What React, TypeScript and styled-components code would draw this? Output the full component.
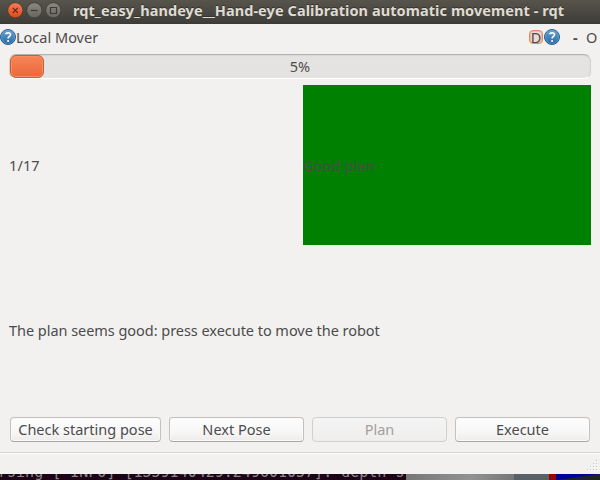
import React from 'react';
import styled, { createGlobalStyle } from 'styled-components';

const GlobalStyle = createGlobalStyle`
  * { box-sizing: border-box; }
  body { margin: 0; overflow: hidden; background: #f2f1f0; }
`;

const Screen = styled.div`
  display: flex;
  flex-direction: column;
  width: 600px;
  height: 480px;
  overflow: hidden;
  background: #f2f1f0;
  color: #4c4c4c;
  font: 14.5px/20px "Noto Sans", sans-serif;
`;

const Label = styled.span<{ $spacing?: number }>`
  white-space: pre;
  letter-spacing: ${p => p.$spacing ?? 0}px;
`;

const TitleBar = styled.header`
  display: flex;
  align-items: center;
  flex: 0 0 24px;
  padding: 0 0 3px 7px;
  background: linear-gradient(#57544b, #3e3d38);
  border-bottom: 1px solid #3b3a35;
`;

const WindowButtons = styled.div`
  display: flex;
  gap: 3px;
  width: 66px;
`;

const WindowButton = styled.svg`
  display: block;
  width: 16px;
  height: 16px;
`;

const Title = styled.h1`
  margin: 0;
  color: #dfdbd2;
  font-size: 14.5px;
  font-weight: 700;
  line-height: 20px;
  white-space: nowrap;
  letter-spacing: 0.075px;
  text-shadow: 0 -1px #33322e;
`;

const DockBar = styled.div`
  display: flex;
  align-items: center;
  flex: 0 0 28px;
  padding: 0 3px 2px 0;
`;

const DockActions = styled.div`
  display: flex;
  align-items: center;
  margin-left: auto;
`;

const ReloadButton = styled.span`
  display: flex;
  align-items: center;
  justify-content: center;
  width: 14px;
  height: 14px;
  margin-right: 1px;
  border: 1px solid #e58a66;
  border-radius: 4px;
  background: #eadbd3;
  box-shadow: inset 0 0 0 1px #e9b9a4;
  line-height: 14px;
`;

const MinimizeGlyph = styled.span`
  width: 26px;
  padding-left: 13px;
  font-weight: 700;
`;

const FloatGlyph = styled.span`
  width: 11px;
`;

const HelpSvg = styled.svg`
  display: block;
  flex: none;
  width: 16px;
  height: 16px;
`;

const Track = styled.div`
  display: grid;
  flex: 0 0 25px;
  margin: 2px 9px 0 9px;
  border: 1px solid #d3d1cf;
  border-top-color: #b4b1ae;
  border-bottom-color: #fff;
  border-radius: 7px;
  background: #e4e3e1;
  box-shadow: inset 0 1px 1px #d7d5d3;
`;

const Chunk = styled.div`
  grid-area: 1 / 1;
  width: 34px;
  height: 23px;
  border: 1px solid #cb5b31;
  border-radius: 6px;
  background: linear-gradient(#f88457, #e9683b);
  box-shadow: inset 0 0 0 1px #f58d67;
`;

const Percent = styled.div`
  grid-area: 1 / 1;
  align-self: center;
  padding-bottom: 1px;
  text-align: center;
`;

const StatusGrid = styled.div`
  display: grid;
  grid-template-columns: 294px 288px;
  flex: 0 0 160px;
  margin: 6px 9px 0;
`;

const StatusCell = styled.div<{ $good?: boolean }>`
  display: flex;
  align-items: center;
  background: ${p => (p.$good ? '#008000' : 'transparent')};
`;

const Message = styled.div`
  display: flex;
  align-items: center;
  flex: 0 0 172px;
  padding: 0 0 2px 9px;
`;

const ButtonRow = styled.div`
  display: grid;
  grid-template-columns: 151px 135px 135px 135px;
  gap: 8px;
  flex: 0 0 25px;
  margin-left: 10px;
`;

const Button = styled.button`
  height: 25px;
  padding: 0 0 1px;
  border: 1px solid #c3c0bd;
  border-bottom-color: #a8a5a2;
  border-radius: 4px;
  background: linear-gradient(#fefefe, #f8f7f7 60%, #edecea);
  box-shadow: inset 0 0 0 1px #fbfafa;
  color: inherit;
  font: inherit;
  line-height: 20px;
  &:disabled {
    border-color: #d2d0ce;
    background: linear-gradient(#f5f4f4, #efeeed);
    box-shadow: none;
    color: #a2a09e;
  }
`;

const StatusBar = styled.footer`
  display: flex;
  align-items: flex-end;
  justify-content: flex-end;
  flex: 0 0 22px;
  margin-top: 10px;
  padding: 0 1px 2px 0;
  border-top: 1px solid #d4d1cf;
  box-shadow: inset 0 1px #fff;
`;

const Backdrop = styled.div`
  display: flex;
  flex: 0 0 6px;
  background: #22262a;
`;

const Terminal = styled.div`
  flex: 0 0 406px;
  height: 6px;
  overflow: hidden;
  background: #1c0315;
  color: #88868a;
  font: 15px/16px "DejaVu Sans Mono", monospace;
  white-space: pre;
`;

const TerminalLine = styled.div`
  margin: -10px 0 0 -11px;
`;

const Patch = styled.div<{ $width: number; $fill: string }>`
  flex: 0 0 ${p => p.$width}px;
  height: 6px;
  background: ${p => p.$fill};
`;

const HelpIcon = () => (
  <HelpSvg viewBox="0 0 16 16">
    <defs>
      <linearGradient id="help" x2="0" y2="1">
        <stop stopColor="#65a3d3" />
        <stop offset="1" stopColor="#2869a4" />
      </linearGradient>
    </defs>
    <circle cx="8" cy="8" r="7.5" fill="url(#help)" stroke="#235f94" />
    <circle cx="8" cy="8" r="6.6" fill="none" stroke="#83b4d8" strokeOpacity=".6" strokeWidth=".7" />
    <path d="M5.6 5.2C6 3.6 10.5 3.1 10.5 5.7C10.5 7.4 8.1 7.5 8.1 9.5" fill="none" stroke="#fff" strokeWidth="1.6" />
    <circle cx="8.1" cy="12" r="1.05" fill="#fff" />
  </HelpSvg>
);

const WindowControl = ({ kind }: { kind: 'close' | 'min' | 'max' }) => (
  <WindowButton viewBox="0 0 16 16">
    <defs>
      <linearGradient id={kind} x2="0" y2="1">
        <stop stopColor={kind === 'close' ? '#f77d57' : '#8c8980'} />
        <stop offset="1" stopColor={kind === 'close' ? '#df4819' : '#66645d'} />
      </linearGradient>
    </defs>
    <circle cx="8.3" cy="8.3" r="7.6" fill={`url(#${kind})`} stroke="#383630" strokeWidth=".7" />
    <path
      d={kind === 'close' ? 'M5.8 5.8L10.8 10.8M10.8 5.8L5.8 10.8' : kind === 'min' ? 'M4.8 8.5H11.8' : 'M5.5 5.5H11.5V11.5H5.5Z'}
      fill="none"
      stroke={kind === 'close' ? '#56281a' : '#3c3b37'}
      strokeWidth="1.2"
    />
  </WindowButton>
);

const SizeGrip = () => (
  <svg width="12" height="12" viewBox="0 0 12 12">
    {[[9, 0], [6, 3], [9, 3], [3, 6], [6, 6], [9, 6], [0, 9], [3, 9], [6, 9], [9, 9]].map(([x, y]) => (
      <g key={`${x}-${y}`}>
        <rect x={x + 1} y={y + 1} width="1" height="1" fill="#fff" />
        <rect x={x} y={y} width="1" height="1" fill="#c8c5c2" />
      </g>
    ))}
  </svg>
);

export default function App() {
  return (
    <>
      <GlobalStyle />
      <Screen>
        <TitleBar>
          <WindowButtons>
            <WindowControl kind="close" />
            <WindowControl kind="min" />
            <WindowControl kind="max" />
          </WindowButtons>
          <Title>rqt_easy_handeye__Hand-eye Calibration automatic movement - rqt</Title>
        </TitleBar>
        <DockBar>
          <HelpIcon />
          <Label>Local Mover</Label>
          <DockActions>
            <ReloadButton>D</ReloadButton>
            <HelpIcon />
            <MinimizeGlyph>-</MinimizeGlyph>
            <FloatGlyph>O</FloatGlyph>
          </DockActions>
        </DockBar>
        <Track>
          <Chunk />
          <Percent>5%</Percent>
        </Track>
        <StatusGrid>
          <StatusCell><Label $spacing={0.1}>1/17</Label></StatusCell>
          <StatusCell $good><Label $spacing={0.2}>Good plan</Label></StatusCell>
        </StatusGrid>
        <Message><Label $spacing={-0.04}>The plan seems good: press execute to move the robot</Label></Message>
        <ButtonRow>
          <Button><Label>Check starting pose</Label></Button>
          <Button><Label>Next Pose</Label></Button>
          <Button disabled><Label>Plan</Label></Button>
          <Button><Label>Execute</Label></Button>
        </ButtonRow>
        <StatusBar><SizeGrip /></StatusBar>
        <Backdrop>
          <Terminal><TerminalLine>arsing [ INFO] [1559140429.249601057]: depth s</TerminalLine></Terminal>
          <Patch $width={108} $fill="linear-gradient(90deg, #777, #929292 60%, #777)" />
          <Patch $width={35} $fill="#596166" />
          <Patch $width={7} $fill="#a00000" />
          <Patch $width={44} $fill="linear-gradient(172deg, #00009a 45%, #202326 55%)" />
        </Backdrop>
      </Screen>
    </>
  );
}
